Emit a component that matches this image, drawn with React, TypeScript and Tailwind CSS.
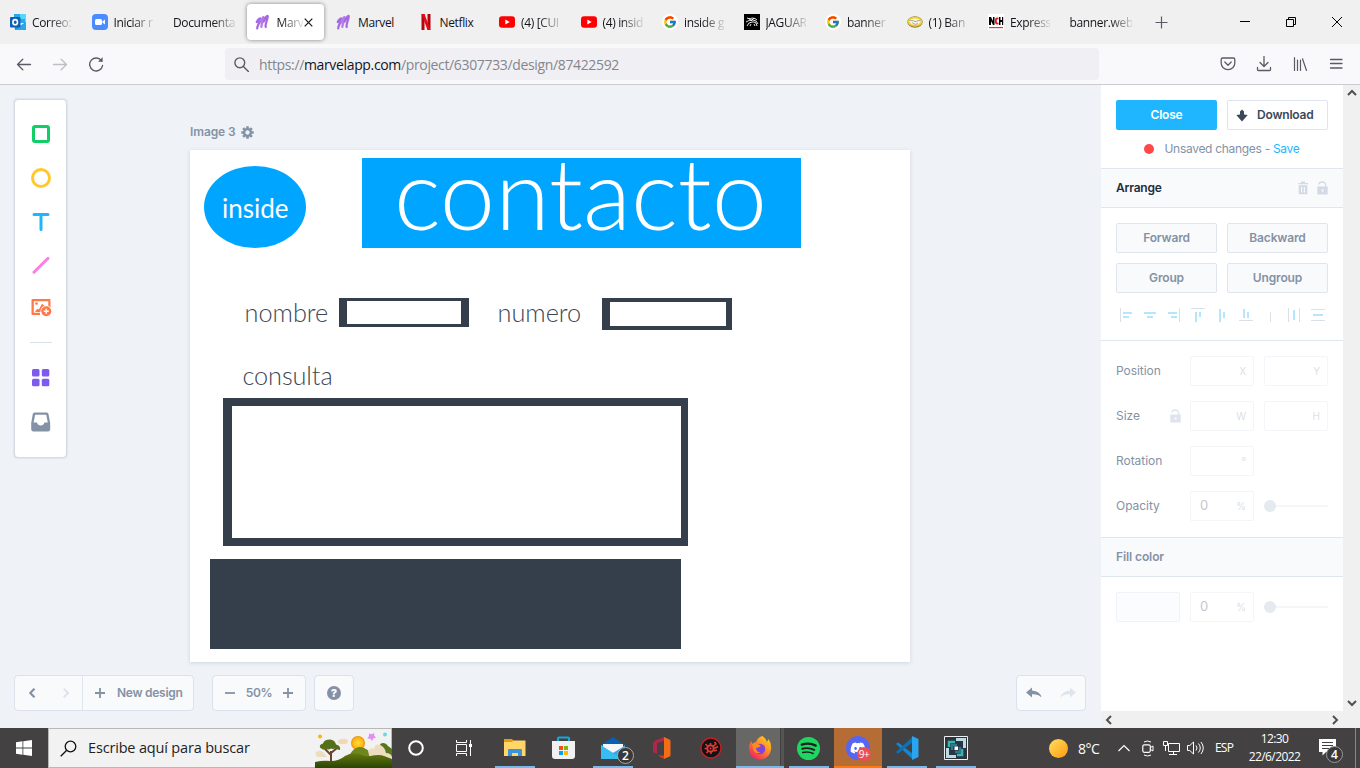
import React from "react";
import { FcGoogle } from "react-icons/fc";
import { FaDiscord } from "react-icons/fa";

const SYS = "font-['Open_Sans','Noto_Sans',sans-serif]";
const UI = "font-['Inter',sans-serif]";

/* ---------- favicons ---------- */

const MarvelIcon = () => (
  <svg width="16" height="16" viewBox="0 0 16 16" fill="none" strokeLinecap="round" strokeLinejoin="round">
    <path d="M1.800 8C3 5.400 5.800 3 5.400 5.200C5 8 2 11.500 2.200 14.400" stroke="#a468e0" strokeWidth="2.300" />
    <path d="M5.200 8.500C6.400 5 9 1.600 8.800 4C8.400 7.400 6.200 9.600 6.400 13" stroke="#b57be9" strokeWidth="2.200" />
    <path d="M8.800 7.500C10 4 12.900 -.2 12.700 2.800C12.300 6.800 9.600 10.600 10.800 13" stroke="#a468e0" strokeWidth="2.200" />
  </svg>
);

const OutlookIcon = () => (
  <svg width="16" height="16" viewBox="0 0 16 16">
    <path d="M4 0h11.500v9H4z" fill="#28a8ea" />
    <path d="M10 0h5.500v5H10z" fill="#50d9ff" />
    <path d="M4 5h6v5H4z" fill="#0364b8" />
    <path d="M4 9l6 3 6-4v8H5z" fill="#1490df" />
    <path d="M16 8v8H5z" fill="#28a8ea" />
    <rect y="3" width="10.500" height="10.500" rx="1" fill="#0f5fb5" />
    <ellipse cx="5.200" cy="8.200" rx="2.300" ry="2.600" fill="none" stroke="#fff" strokeWidth="1.600" />
  </svg>
);

const ZoomIcon = () => (
  <svg width="16" height="16" viewBox="0 0 16 16">
    <rect width="16" height="16" rx="4" fill="#4a8cff" />
    <rect x="3" y="5" width="7" height="6" rx="1.500" fill="#fff" />
    <path d="M10.500 7.300L13 5.500v5l-2.500-1.800z" fill="#fff" />
  </svg>
);

const NetflixIcon = () => (
  <svg width="16" height="16" viewBox="0 0 16 16">
    <path d="M3.500 0h3v16h-3zM9.500 0h3v16h-3z" fill="#b1060f" />
    <path d="M3.500 0h3l6 16h-3z" fill="#e50914" />
  </svg>
);

const YoutubeIcon = () => (
  <svg width="16" height="16" viewBox="0 0 16 16">
    <rect y="2.300" width="16" height="11.400" rx="3" fill="#f00" />
    <path d="M6.300 5.500v5L10.700 8z" fill="#fff" />
  </svg>
);

const GoogleIcon = () => (
  <span className="flex h-4 w-4 items-center justify-center rounded-full bg-white">
    <FcGoogle size={14} />
  </span>
);

const JaguarIcon = () => (
  <svg width="16" height="16" viewBox="0 0 16 16">
    <path d="M0 0h16v16H0z" fill="#000" />
    <path d="M3 4l3 1 2-1 3 .5 2 1.500M2 8l4-2 3 0 3 1 2 3M3 12l2-3 3-1 2 0 2 1 1 3M6 12l1-2M11 12l-1-2M5 4l2 3 3-3" fill="none" stroke="#fff" strokeWidth=".9" />
  </svg>
);

const MercadoIcon = () => (
  <svg width="16" height="16" viewBox="0 0 16 16">
    <ellipse cx="8" cy="8" rx="7.700" ry="5.700" fill="#8a7a3a" />
    <ellipse cx="8" cy="7.700" rx="7.200" ry="5" fill="#f7d02c" />
    <path d="M2 6.500Q8 2.500 14 6.500Q12.500 11 8 11Q3.500 11 2 6.500z" fill="#f6f5ea" />
    <path d="M2.500 6.500l4 .2 1.500 1 3-1 2.800-.2M5 8.500l2 1.500 2 .4 2-1.500" fill="none" stroke="#8b8b70" strokeWidth=".7" />
    <path d="M1.300 9.300Q8 15.500 14.700 9.300Q12 12 8 12Q4 12 1.300 9.300z" fill="#e3ac19" />
  </svg>
);

const NchIcon = () => (
  <svg width="16" height="16" viewBox="0 0 16 16">
    <path d="M0 0h16v16H0z" fill="#fff" />
    <path d="M1 11V3h2l2 4V3h1.500v8H5L3 7v4z" fill="#000" />
    <path d="M11 3v8h1.500V8H14v3h1.200V3H14v3h-1.500V3z" fill="#000" />
    <path d="M10.500 3.800Q7 2.500 6.800 7Q7 11.500 10.500 10.300V8.500Q8.700 9.300 8.700 7T10.500 5.600z" fill="#e02025" />
    <path d="M1 13h14v1.200H1z" fill="#c44" />
  </svg>
);

type Tab = { label: string; icon?: React.ReactNode; active?: boolean; whole?: boolean };
const tabs: Tab[] = [
  { label: "Correo:", icon: <OutlookIcon /> },
  { label: "Iniciar r", icon: <ZoomIcon /> },
  { label: "Documenta" },
  { label: "Marv", icon: <MarvelIcon />, active: true },
  { label: "Marvel", icon: <MarvelIcon />, whole: true },
  { label: "Netflix", icon: <NetflixIcon />, whole: true },
  { label: "(4) [CUI", icon: <YoutubeIcon /> },
  { label: "(4) insid", icon: <YoutubeIcon /> },
  { label: "inside g", icon: <GoogleIcon /> },
  { label: "JAGUAR", icon: <JaguarIcon /> },
  { label: "banner", icon: <GoogleIcon /> },
  { label: "(1) Ban", icon: <MercadoIcon /> },
  { label: "Express", icon: <NchIcon /> },
  { label: "banner.web" },
];

const FADE = "[mask-image:linear-gradient(to_right,#000_calc(100%-22px),transparent_calc(100%+3px))]";

function TabBar() {
  return (
    <div className="flex h-[44px] shrink-0 items-center bg-[#f0f0f0] pl-[2px]">
      {tabs.map((t, i) => (
        <div key={i} className="w-[81.5px] shrink-0">
          <div
            className={
              t.active
                ? "flex h-9 w-[77px] items-center rounded bg-white pl-2 shadow-[0_0_4px_rgba(0,0,0,0.45)]"
                : "flex h-9 w-[77px] items-center pl-2"
            }
          >
            {t.icon && <span className="mr-[6px] h-4 w-4 shrink-0">{t.icon}</span>}
            <span
              className={
                (t.active ? "w-[26px] " : t.icon ? "w-[40px] " : "w-[62px] ") +
                "shrink-0 whitespace-nowrap pt-[2px] text-[12px] tracking-[-0.35px] text-[#15141a] " +
                (t.whole ? "" : FADE)
              }
            >
              {t.label}
            </span>
            {t.active && (
              <svg className="ml-px" width="9" height="9" viewBox="0 0 9 9" stroke="#15141a" strokeWidth="1.200">
                <path d="M.7.7l7.600 7.600M8.300.7L.7 8.300" />
              </svg>
            )}
          </div>
        </div>
      ))}
      <svg className="ml-[12px] mt-px" width="13" height="13" viewBox="0 0 13 13" stroke="#5b5b66" strokeWidth="1.200">
        <path d="M6.500 .5v12M.5 6.500h12" />
      </svg>
      <div className="ml-auto flex items-center">
        <span className="flex w-[46px] justify-center">
          <svg width="10" height="10" viewBox="0 0 10 10" stroke="#000"><path d="M0 4.500h10" /></svg>
        </span>
        <span className="flex w-[46px] justify-center">
          <svg width="10" height="10" viewBox="0 0 10 10" stroke="#000" fill="none"><path d="M.5 2.500h7v7h-7zM2.500 2.500v-2h7v7h-2" /></svg>
        </span>
        <span className="flex w-[46px] justify-center">
          <svg width="10" height="10" viewBox="0 0 10 10" stroke="#000"><path d="M0 0l10 10M10 0L0 10" /></svg>
        </span>
      </div>
    </div>
  );
}

function Toolbar() {
  return (
    <div className="flex h-[41px] shrink-0 items-center border-b border-[#cccccf] bg-[#f9f9fb]">
      <svg className="ml-4" width="16" height="16" viewBox="0 0 16 16" fill="none" stroke="#5b5b66" strokeWidth="1.300" strokeLinecap="round" strokeLinejoin="round">
        <path d="M1.500 8.500h13M6.800 3.300L1.500 8.500l5.300 5.200" />
      </svg>
      <svg className="ml-5" width="16" height="16" viewBox="0 0 16 16" fill="none" stroke="#bebec4" strokeWidth="1.300" strokeLinecap="round" strokeLinejoin="round">
        <path d="M1.500 8.500h13M9.200 3.300l5.300 5.200-5.300 5.200" />
      </svg>
      <svg className="ml-5" width="16" height="16" viewBox="0 0 16 16" fill="none" stroke="#5b5b66" strokeWidth="1.400" strokeLinecap="round">
        <path d="M13.700 5A6.500 6.500 0 1 0 14.600 9.500" />
        <path d="M14.600 1.200v4.600H10z" fill="#5b5b66" stroke="none" />
      </svg>
      <div className="ml-[121px] flex h-8 w-[874px] items-center rounded bg-[#f0f0f4] pl-[9px]">
        <svg width="15" height="15" viewBox="0 0 15 15" fill="none" stroke="#5b5b66" strokeWidth="1.400" strokeLinecap="round">
          <circle cx="5.800" cy="5.800" r="4.900" /><path d="M9.400 9.400l5 5" />
        </svg>
        <span className="ml-[10px] whitespace-nowrap pt-px text-[14px] tracking-[-0.35px] text-[#85858c]">
          https://<span className="text-[#15141a]">marvelapp.com</span>/project/6307733/design/87422592
        </span>
      </div>
      <div className="ml-auto flex items-center gap-5 pr-4 text-[#5b5b66]">
        <svg width="16" height="16" viewBox="0 0 16 16" fill="none" stroke="currentColor" strokeWidth="1.300" strokeLinecap="round" strokeLinejoin="round">
          <path d="M2.700 2h10.600a1.500 1.500 0 0 1 1.500 1.500v3.800a6.800 6.300 0 0 1-13.600 0V3.500A1.500 1.500 0 0 1 2.700 2zM4.800 6L8 9.200 11.200 6" />
        </svg>
        <svg width="16" height="16" viewBox="0 0 16 16" fill="none" stroke="currentColor" strokeWidth="1.300" strokeLinecap="round" strokeLinejoin="round">
          <path d="M8 .5v9.800M4 6.500l4 4 4-4M1.500 11.500v2q0 1 1 1h11q1 0 1-1v-2" />
        </svg>
        <svg width="16" height="16" viewBox="0 0 16 16" fill="none" stroke="currentColor" strokeWidth="1.200" strokeLinecap="round">
          <path d="M2.500 1.500v13M5.500 4v10.500M8.500 4v10.500M10.500 2.800l4 11.700" />
        </svg>
        <svg width="16" height="16" viewBox="0 0 16 16" fill="none" stroke="currentColor" strokeWidth="1.300" strokeLinecap="round">
          <path d="M2.500 3.500h11.500M2.500 7.500h11.500M2.500 12h11.500" />
        </svg>
      </div>
    </div>
  );
}

/* ---------- editor ---------- */

function ToolPanel() {
  return (
    <div className="mt-[14px] flex h-[359px] w-[53px] shrink-0 flex-col items-center rounded border border-[#d5dbe5] bg-white pt-[23px] shadow-[0_0_2px_rgba(80,100,140,0.25)]">
      <svg width="22" height="22" viewBox="0 0 22 22" fill="none" stroke="#13ce66" strokeWidth="3"><rect x="3.500" y="3.500" width="15" height="15" rx="1.500" /></svg>
      <svg className="mt-[22px]" width="22" height="22" viewBox="0 0 22 22" fill="none" stroke="#ffc82c" strokeWidth="3"><circle cx="11" cy="11" r="8.500" /></svg>
      <svg className="mt-[22px]" width="22" height="22" viewBox="0 0 22 22" fill="none" stroke="#1fb6ff" strokeWidth="3" strokeLinecap="round"><path d="M4 3.500h14M11 4v14.500" /></svg>
      <svg className="mt-[21px]" width="22" height="22" viewBox="0 0 22 22" fill="none" stroke="#ff7ce5" strokeWidth="3" strokeLinecap="round"><path d="M4 18.300L18 4.300" /></svg>
      <svg className="mt-[20px]" width="22" height="22" viewBox="0 0 22 22">
        <path d="M2.500 3h17q1 0 1 1v8h-2.200V5.200H3.800v11.600H10V19H2.500q-1 0-1-1V4q0-1 1-1z" fill="#ff7849" />
        <circle cx="6.500" cy="7.500" r="1.300" fill="#ff7849" />
        <path d="M5 16l2-3 2 .3 3-5.500 2.500 2-4 6.200z" fill="#ff7849" />
        <circle cx="16.300" cy="15.200" r="5.800" fill="#fff" />
        <circle cx="16.300" cy="15.200" r="5" fill="#ff7849" />
        <path d="M16.300 12.700v5M13.800 15.200h5" stroke="#fff" strokeWidth="1.500" />
      </svg>
      <div className="mt-[24px] h-px w-[22px] bg-[#d9e1eb]" />
      <svg className="mt-6" width="22" height="22" viewBox="0 0 22 22" fill="#7e5bef">
        <rect x="2" y="2" width="7.500" height="7.500" rx="1.500" /><rect x="11.800" y="2" width="7.500" height="7.500" rx="1.500" />
        <rect x="2" y="11.800" width="7.500" height="7.500" rx="1.500" /><rect x="11.800" y="11.800" width="7.500" height="7.500" rx="1.500" />
      </svg>
      <svg className="mt-[22px]" width="22" height="22" viewBox="0 0 22 22">
        <path fillRule="evenodd" d="M4.500 1.500h12.300q1.400 0 1.700 1.500l1.700 9v6.300q0 2.200-2.200 2.200H3.400q-2.200 0-2.200-2.200V12L2.800 3q.3-1.500 1.700-1.500zM5.200 3.800L3.600 11.500H7q.7 3 3.700 3t3.700-3h3.400L16.200 3.800z" fill="#8492a6" />
      </svg>
    </div>
  );
}

function Artboard() {
  return (
    <div className="relative h-[512px] w-[720px] overflow-visible bg-white font-['Lato',sans-serif] text-[#3c4858] shadow-[0_1px_4px_rgba(60,80,120,0.18)]">
      <div className="absolute left-[14px] top-[16px] h-[82px] w-[102px] rounded-[50%] bg-[#00a5ff]" />
      <div className="absolute left-[32px] top-[45px] whitespace-nowrap text-[26px] leading-none text-white">inside</div>
      <div className="absolute left-[172px] top-[8px] h-[90px] w-[439px] bg-[#00a5ff]" />
      <div className="absolute left-[204px] top-[-8px] whitespace-nowrap text-[99.200px] font-light leading-none text-white">contacto</div>
      <div className="absolute left-[54.500px] top-[149.500px] whitespace-nowrap text-[25.300px] font-light leading-none">nombre</div>
      <div className="absolute left-[307.500px] top-[149.500px] whitespace-nowrap text-[25.300px] font-light leading-none">numero</div>
      <div className="absolute left-[52.500px] top-[212.500px] whitespace-nowrap text-[25.300px] font-light leading-none tracking-[-0.1px]">consulta</div>
      <div className="absolute left-[149px] top-[148px] h-[29px] w-[130px] border-x-8 border-y-[3px] border-[#343f4b]" />
      <div className="absolute left-[412px] top-[148px] h-[32px] w-[130px] border-y-4 border-l-8 border-r-[6px] border-[#343f4b]" />
      <div className="absolute left-[33px] top-[248px] h-[148px] w-[465px] border-y-8 border-l-[9px] border-r-[7px] border-[#343f4b]" />
      <div className="absolute left-[20px] top-[409px] h-[90px] w-[471px] bg-[#343f4b]" />
    </div>
  );
}

const BAR = "flex h-9 items-center rounded border border-[#dce2eb] bg-[#f9fafc]";

function Plus() {
  return <svg width="10" height="10" viewBox="0 0 10 10" stroke="#8492a6" strokeWidth="1.800"><path d="M5 0v10M0 5h10" /></svg>;
}

function BottomBar() {
  return (
    <div className={"flex pl-[14px] pr-[15px] text-[12px] font-semibold text-[#8492a6] " + UI}>
      <div className={BAR + " w-[180px]"}>
        <div className="flex h-full w-[68px] items-center border-r border-[#e0e6ed] pl-[14px]">
          <svg width="7" height="10" viewBox="0 0 7 10" fill="none" stroke="#8492a6" strokeWidth="2.200"><path d="M5.500.7L1.200 5l4.300 4.300" /></svg>
          <svg className="ml-[27px]" width="7" height="10" viewBox="0 0 7 10" fill="none" stroke="#dde3ec" strokeWidth="2"><path d="M.8.7L5.100 5 .8 9.300" /></svg>
        </div>
        <span className="ml-3"><Plus /></span>
        <span className="ml-[12px] whitespace-nowrap tracking-[-0.27px]">New design</span>
      </div>
      <div className={BAR + " ml-[18px] w-[94px] justify-between px-3"}>
        <svg width="10" height="10" viewBox="0 0 10 10" stroke="#8492a6" strokeWidth="1.800"><path d="M0 5h10" /></svg>
        <span className="tracking-[-0.3px]">50%</span>
        <Plus />
      </div>
      <div className={BAR + " ml-2 w-10 justify-center"}>
        <span className="flex h-[14px] w-[14px] items-center justify-center rounded-full bg-[#8492a6] text-[11px] font-extrabold leading-none text-white">?</span>
      </div>
      <div className={BAR + " ml-auto w-[70px] justify-between px-[9px]"}>
        <svg width="16" height="12" viewBox="0 0 16 12" fill="#8492a6"><path d="M0 5.500L6 .5v3q8 .5 9.500 7Q12 7 6 7.300v3.200z" /></svg>
        <svg width="16" height="12" viewBox="0 0 16 12" fill="#dfe5ed"><path d="M16 5.500L10 .5v3q-8 .5-9.500 7Q4 7 10 7.300v3.200z" /></svg>
      </div>
    </div>
  );
}

function Gear() {
  return (
    <svg width="13" height="13" viewBox="0 0 14 14">
      <g stroke="#8492a6" strokeWidth="2.800"><path d="M7 .3v13.400M.3 7h13.400M2.300 2.300l9.400 9.400M11.700 2.300l-9.400 9.400" /></g>
      <circle cx="7" cy="7" r="4.800" fill="#8492a6" /><circle cx="7" cy="7" r="2.300" fill="#eff2f7" />
    </svg>
  );
}

function Lock() {
  return (
    <svg width="11" height="14" viewBox="0 0 11 14">
      <path d="M1.800 3.500Q2.200 1 5.200 1T8.700 4v2" fill="none" stroke="#d3dae6" strokeWidth="1.300" />
      <path d="M.3 5.500h10.400v8H.3zM4.600 8.500v2h2v-2z" fillRule="evenodd" fill="#d3dae6" />
    </svg>
  );
}

const alignIcons: { b?: string; l?: string }[] = [
  { l: "M6.500 1v14", b: "M9 6h9M9 10h6" },
  { b: "M6 6h12M9 10h6" },
  { b: "M6 6h9M9 10h6", l: "M17.500 1v14" },
  { l: "M5 1.500h14", b: "M10 5v10M14 5v5" },
  { b: "M10 2v13M14 5v6" },
  { b: "M10 2v9M14 5v6", l: "M5 13.500h14" },
  { l: "M12.500 5v10" },
  { l: "M6.500 1v14M17.500 1v14", b: "M12 3v10" },
  { l: "M5 2.500h14M5 13.500h14", b: "M7 8h10" },
];

const Btn = ({ children }: { children: React.ReactNode }) => (
  <div className="flex h-[30px] items-center justify-center rounded-[2px] border border-[#dfe5ee] bg-[#f9fafc] font-semibold tracking-[-0.15px] text-[#8492a6]">{children}</div>
);

const Field = ({ value, unit }: { value?: string; unit: string }) => (
  <div className="flex h-[30px] w-16 shrink-0 items-center justify-between rounded-[2px] border border-[#f3f5f8] pl-[9px] pr-[7px]">
    <span className="text-[13px] text-[#c3c8d0]">{value}</span>
    <span className="text-[10px] text-[#dbdfe7]">{unit}</span>
  </div>
);

const Slider = () => (
  <div className="flex w-16 items-center">
    <span className="h-3 w-3 rounded-full bg-[#e5e9f0]" />
    <span className="h-[2px] flex-1 bg-[#f5f6f9]" />
  </div>
);

const Row = ({ label, lock, children }: { label: string; lock?: boolean; children: React.ReactNode }) => (
  <div className="flex items-center">
    <span className="w-[54px] tracking-[-0.05px]">{label}</span>
    <span className="w-5 opacity-75">{lock && <Lock />}</span>
    <div className="flex gap-[10px]">{children}</div>
  </div>
);

function Inspector() {
  return (
    <div className={"flex-1 overflow-hidden bg-white text-[12px] text-[#8492a6] " + UI}>
      <div className="h-[83px] px-[15px] pt-[15px]">
        <div className="grid grid-cols-2 gap-[10px] font-semibold">
          <div className="flex h-[30px] items-center justify-center rounded-[2px] bg-[#1fb6ff] tracking-[-0.2px] text-white">Close</div>
          <div className="flex h-[30px] items-center rounded-[2px] border border-[#dfe5ee] pl-2 text-[#3c4858]">
            <svg width="12" height="13" viewBox="0 0 12 13" fill="#3c4858"><path d="M4 2.500L6 .5l2 2V5.500l3.700.5L6 12.500.3 6 4 5.500z" /></svg>
            <span className="ml-[9px] tracking-[-0.2px]">Download</span>
          </div>
        </div>
        <div className="mt-[10px] flex h-[18px] items-center justify-center whitespace-nowrap">
          <span className="mr-[10px] h-[10px] w-[10px] rounded-full bg-[#ff4949]" />
          <span className="tracking-[-0.3px]">Unsaved changes - <span className="text-[#1fb6ff]">Save</span></span>
        </div>
      </div>
      <div className="flex h-10 items-center border-y border-[#e0e6ed] bg-[#f9fafc] px-[15px] font-semibold tracking-[-0.2px] text-[#1f2d3d]">
        Arrange
        <div className="ml-auto flex items-center gap-[9px]">
          <svg width="10" height="14" viewBox="0 0 10 14" fill="#d3dae6"><path fillRule="evenodd" d="M0 2h3V.5h4V2h3v1.200H0zM.7 4.300h8.600v9H.7zM3 6v5.600h1.200V6zm2.800 0v5.600H7V6z" /></svg>
          <Lock />
        </div>
      </div>
      <div className="h-[132px] px-[15px] pt-[15px]">
        <div className="grid grid-cols-2 gap-[10px]">
          <Btn>Forward</Btn><Btn>Backward</Btn><Btn>Group</Btn><Btn>Ungroup</Btn>
        </div>
        <div className="-ml-[2px] mt-[14px] flex">
          {alignIcons.map((a, i) => (
            <svg key={i} className="shrink-0" width="24" height="16" viewBox="0 0 24 16" fill="none">
              {a.l && <path d={a.l} stroke="#dadfe8" />}
              {a.b && <path d={a.b} stroke="#b4e6fd" strokeWidth="2" />}
            </svg>
          ))}
        </div>
      </div>
      <div className="flex h-[198px] flex-col gap-[15px] border-y border-[#e0e6ed] px-[15px] pt-[15px]">
        <Row label="Position"><Field unit="X" /><Field unit="Y" /></Row>
        <Row label="Size" lock><Field unit="W" /><Field unit="H" /></Row>
        <Row label="Rotation"><Field unit="°" /></Row>
        <Row label="Opacity"><Field value="0" unit="%" /><Slider /></Row>
      </div>
      <div className="flex h-[39px] items-center border-b border-[#e0e6ed] bg-[#f9fafc] px-[15px] font-semibold tracking-[-0.1px]">Fill color</div>
      <div className="flex gap-[10px] px-[15px] pt-[15px]">
        <div className="h-[30px] w-16 rounded-[2px] border border-[#eff2f7] bg-[#fbfcfe]" />
        <Field value="0" unit="%" />
        <Slider />
      </div>
    </div>
  );
}

const Chev = ({ d }: { d: string }) => (
  <svg width="10" height="10" viewBox="0 0 10 10" fill="none" stroke="#505050" strokeWidth="2"><path d={d} /></svg>
);

/* ---------- task bar ---------- */

const DT = "h-full w-[49px] shrink-0 flex flex-col items-center justify-center relative ";
const Cell = ({ children, line, cls = "" }: { children: React.ReactNode; line?: "app" | "full" | "alert"; cls?: string }) => (
  <div className={DT + cls}>
    {children}
    {line === "app" && <span className="absolute bottom-0 h-[2px] w-10 bg-[#76b9ed]" />}
    {line === "full" && <span className="absolute bottom-0 right-0 h-[2px] w-12 bg-[#76b9ed]" />}
    {line === "alert" && <span className="absolute bottom-0 right-0 h-[2px] w-12 bg-[#ff7a0c]" />}
  </div>
);

function Landscape() {
  return (
    <svg className="-mr-px ml-auto" width="77" height="39" viewBox="0 0 77 39">
      <defs>
        <radialGradient id="sun"><stop offset="0" stopColor="#ffdd35" /><stop offset=".7" stopColor="#ffb914" /><stop offset="1" stopColor="#e88a10" /></radialGradient>
        <linearGradient id="hill" x2="0" y2="1"><stop stopColor="#66780f" /><stop offset="1" stopColor="#274604" /></linearGradient>
      </defs>
      <circle cx="5" cy="7.500" r="2" fill="#ffb31a" />
      <circle cx="70" cy="5.500" r="2" fill="#6fd6e8" />
      <path d="M54 4.500l2.500.8L59 4l.3 2.700 1.700 2-2.600.6-1.400 2.700-1.600-2.300-3.100-.2 1.600-2.300z" fill="#e28cf5" />
      <ellipse cx="28" cy="12.500" rx="5" ry="2.800" fill="#f1d9b5" />
      <circle cx="43" cy="14" r="7" fill="url(#sun)" />
      <path d="M0 24q4-4 8-1l4 5H2z" fill="#eedcc0" />
      <path d="M34 27q4-8 10-9 8-1 16 12H34z" fill="#6d8718" />
      <path d="M65 15q5-3 8 2l4 3v10l-9-7z" fill="#56781a" />
      <path d="M53 22q3-4 6-2 1-6 6-4 5 2 6 8 5 0 6 4v2H55z" fill="#eedcc0" />
      <path d="M16 33V22M16 26l-6-6M16 24l6-5" stroke="#6b432e" strokeWidth="2" fill="none" />
      <path d="M5 18.500q-1-3 3-4 1-4 7-4 5 .5 6 5 5 1 4 5.500-3 0-4-2-3 1.500-5 .5-2 1.500-5 .5-2 2-6-1.500z" fill="#56701a" />
      <path d="M0 39V33q8-2 16-1 8 0 14-5 8-5 17-1 4 2 8 1 10-2 14 0l8 3v9z" fill="url(#hill)" />
    </svg>
  );
}

function Taskbar() {
  return (
    <div className="flex h-10 w-full shrink-0 items-center bg-[#434141] text-white">
      <div className="flex w-12 justify-center">
        <svg width="16" height="16" viewBox="0 0 16 16" fill="#fff"><path d="M0 2.200L6.500 1.300v6.300H0zM7.300 1.200L16 0v7.600H7.300zM0 8.400h6.500v6.300L0 13.800zM7.300 8.400H16V16l-8.700-1.200z" /></svg>
      </div>
      <div className="flex h-10 w-[344px] items-center border border-[#b8b8b8] bg-[#f2f2f2] pl-[11px]">
        <svg width="17" height="17" viewBox="0 0 17 17" fill="none" stroke="#111" strokeWidth="1.300"><circle cx="10.500" cy="6.500" r="5.300" /><path d="M6.700 10.300L.7 16.300" /></svg>
        <span className="ml-[11px] whitespace-nowrap text-[14.500px] tracking-[-0.17px] text-[#222]">Escribe aquí para buscar</span>
        <Landscape />
      </div>
      <div className="flex h-full">
        <Cell><svg className="mr-px" width="16" height="16" viewBox="0 0 16 16" fill="none" stroke="#fff" strokeWidth="2"><circle cx="8" cy="8" r="6.800" /></svg></Cell>
        <Cell><svg className="mr-1" width="16" height="16" viewBox="0 0 16 16" fill="none" stroke="#fff"><path d="M.5 0v2.500h10V0M.5 16v-2.500h10V16M.5 4.500h10v7H.5zM14.500 0v16" /><path d="M13 4h3v3h-3z" fill="#fff" stroke="none" /></svg></Cell>
        <Cell line="app">
          <svg width="22" height="20" viewBox="0 0 22 20"><path d="M0 1h8l2 2h11v7H0z" fill="#e0a106" /><path d="M0 4h8l1.500-1.500H21.500V18H0z" fill="#ffd667" /><path d="M4 18v-6q0-1 1-1h12q1 0 1 1v6h-4v-3H8v3z" fill="#3a93dd" /></svg>
        </Cell>
        <Cell>
          <svg width="23" height="24" viewBox="0 0 23 24"><path d="M6 6V2.500q0-1 1-1h9q1 0 1 1V6" fill="none" stroke="#12a8dc" strokeWidth="2.200" /><path d="M0 5h23v15q0 3-3 3H3q-3 0-3-3z" fill="#f1f1f1" /><path d="M7 10h4v4H7z" fill="#f25022" /><path d="M12 10h4v4h-4z" fill="#7fba00" /><path d="M7 15h4v4H7z" fill="#00a4ef" /><path d="M12 15h4v4h-4z" fill="#ffb900" /></svg>
        </Cell>
        <Cell line="app">
          <svg width="24" height="23" viewBox="0 0 24 23"><path d="M0 8L12 0l12 8v3H0z" fill="#0a5fb0" /><path d="M0 8l12 8 12-8v14H0z" fill="#2ea9ea" /><path d="M2 7h20v3l-10 6L2 10z" fill="#f4f6fa" /><path d="M0 8l13 9 11 5H0z" fill="#38bdf2" /></svg>
          <span className="absolute left-[29px] top-[19px] flex h-[17px] w-[17px] items-center justify-center rounded-full border border-[#aaa] bg-[#393939] text-[12px] font-semibold leading-none">2</span>
        </Cell>
        <Cell><svg width="18" height="22" viewBox="0 0 18 22"><path d="M11 0L2 3.800Q0 5 0 7v8l4 2V6l7-2z" fill="#b3264c" /><path d="M11 0l5.500 2.500Q17.500 3 17.500 4v14q0 1-1 1.500L11 22z" fill="#f36c16" /><path d="M2 17l9 5v-3.500H5z" fill="#d93a1e" /></svg></Cell>
        <Cell><svg width="22" height="22" viewBox="0 0 22 22" fill="none"><circle cx="11" cy="11" r="10" fill="#141214" stroke="#c32025" strokeWidth="1.400" /><circle cx="10.500" cy="11.500" r="3.200" stroke="#e23a34" strokeWidth="1.800" /><path d="M5.500 7l2 2M4.500 11.500l2.500 0M6.500 16l2-2M11 17v-2M10.500 6v2M16.500 6.500l-3.500 3M18 9.500l-4 2M14 14l3-1M14.500 5l1.500 2" stroke="#e23a34" strokeWidth="1.600" /><circle cx="10.500" cy="11.500" r="1" fill="#e23a34" /></svg></Cell>
        <Cell line="full" cls="bg-[linear-gradient(to_right,transparent_1px,#676766_1px,#676766_45px,#3f3f3f_45px,#3f3f3f_46px,#565554_46px)]">
          <svg className="ml-px" width="24" height="24" viewBox="0 0 24 24">
            <defs><linearGradient id="ff" x1="1" y1="0" x2=".2" y2="1"><stop stopColor="#ffe226" /><stop offset=".45" stopColor="#ff9025" /><stop offset="1" stopColor="#f31e66" /></linearGradient></defs>
            <path d="M14.500 0q4 3 4.500 6l1.500-3Q24 8 23 14q-2 9-11 9.500Q2 23 1 14q-.5-5 2-9l1.500 3Q6 6 8 6q2-5 6.500-6z" fill="url(#ff)" />
            <circle cx="12" cy="13" r="5.200" fill="#8243d8" />
            <path d="M4 8q5-2 9 2-2 1.500-5 2 0 4 4.500 4.500Q8 19 5.500 14z" fill="#ff8a22" />
          </svg>
        </Cell>
        <Cell line="app"><svg width="23" height="23" viewBox="0 0 24 24" fill="none" stroke="#202020" strokeLinecap="round"><circle cx="12" cy="12" r="12" fill="#1ed760" stroke="none" /><path d="M5 8q8-2.500 14.500 1" strokeWidth="2.400" /><path d="M5.500 12.300Q12 10.500 18 13.500" strokeWidth="2" /><path d="M6 16.200q6-1.500 10.800 1" strokeWidth="1.700" /></svg></Cell>
        <Cell line="alert" cls="bg-[linear-gradient(to_right,transparent_1px,#b56d35_1px)]">
          <span className="flex h-6 w-6 items-center justify-center rounded-full bg-[#5865f2]"><FaDiscord size={16} /></span>
          <span className="absolute left-[24px] top-[19px] flex h-[14px] w-[14px] items-center justify-center rounded-full bg-[#ed4f50] text-[10px] leading-none tracking-[-0.5px]">9+</span>
        </Cell>
        <Cell line="app"><svg width="24" height="24" viewBox="0 0 24 24"><path d="M1 8l2-1.700L18 18v5.500z" fill="#1686cf" /><path d="M1 16l2 1.700L18 6V.5z" fill="#0b72b8" /><path d="M17 0l6.500 3v18L17 24z" fill="#2aa4ee" /></svg></Cell>
        <Cell line="app">
          <svg width="24" height="24" viewBox="0 0 24 24" fill="none"><path d="M.5 .5h23v23H.5z" fill="#2c3442" stroke="#eee" /><path d="M12 3.500h8.500V12M3.500 12v8.500H12" stroke="#b9dce4" strokeWidth="3" /><path d="M5 11V6h6M13 19h5v-6" stroke="#34b9a7" strokeWidth="2.600" /><path d="M8 14V9h5M16 11v5h-5" stroke="#297a93" strokeWidth="2.400" /><path d="M10.500 10.500h3.500v3.500h-3.500z" fill="#fff" /></svg>
        </Cell>
      </div>
      <div className="ml-auto flex h-full items-center">
        <span className="h-[19px] w-[19px] rounded-full bg-[linear-gradient(135deg,#ffdf62,#ff9a0c)]" />
        <span className="ml-[10px] w-[39px] whitespace-nowrap pt-px text-[14px] tracking-[-0.55px]">8°C</span>
        <svg width="14" height="8" viewBox="0 0 14 8" fill="none" stroke="#fff" strokeWidth="1.200"><path d="M1.500 7L7 1.500 12.500 7" /></svg>
        <svg className="ml-[11px]" width="12" height="17" viewBox="0 0 12 17" fill="none" stroke="#fff"><path d="M2 2q3.500-2 7 0M2 15q3.500 2 7 0" /><rect x=".8" y="4.800" width="7.500" height="7.500" rx="1.500" strokeWidth="1.200" /><path d="M8.500 7.500l2.500-1.500v5L8.500 9.500" /></svg>
        <svg className="ml-[9px]" width="17" height="15" viewBox="0 0 17 15" fill="none" stroke="#fff"><path d="M5.500 2.500h11v8h-11zM6 13.500h8M10.500 10.500v3M.5 .5h4v4h-4zM2.500 4.500v5.500" /></svg>
        <svg className="ml-[7px]" width="17" height="16" viewBox="0 0 17 16" fill="none" stroke="#fff"><path d="M.5 5.500h2.300L6.500 2v12L2.800 10.500H.5zM9 5.500q2 2.500 0 5M11.500 3.500q3.500 4.500 0 9M14 2q4.500 6 0 12" /></svg>
        <span className="ml-[11px] w-[20px] whitespace-nowrap text-[12px] tracking-[-0.8px]">ESP</span>
        <div className="ml-[11px] flex w-[57px] flex-col items-center whitespace-nowrap text-[12px] leading-[18px] tracking-[-0.6px]">
          <span>12:30</span><span>22/6/2022</span>
        </div>
        <div className="relative ml-[16px] h-[26px] w-[26px]">
          <svg className="mt-[4px]" width="17" height="17" viewBox="0 0 17 17"><path d="M0 0h17v13H7l-3.500 3.500V13H0z" fill="#fff" /><path d="M3 3.500h11M3 6.500h11M3 9.500h8" stroke="#434141" /></svg>
          <span className="absolute left-[7px] top-[11px] flex h-[17px] w-[17px] items-center justify-center rounded-full border border-[#999] bg-[#393939] text-[12px] font-semibold leading-none">4</span>
        </div>
        <span className="ml-[10px] mr-1 h-full w-px bg-[#8a8888]" />
      </div>
    </div>
  );
}

export default function App() {
  return (
    <div className={"flex h-[768px] w-[1360px] flex-col overflow-hidden bg-[#eff2f7] " + SYS}>
      <TabBar />
      <Toolbar />
      <div className="flex h-[643px] shrink-0">
        <main className="flex w-[1101px] flex-col">
          <div className="flex h-[590px] pl-[14px]">
            <ToolPanel />
            <div className="ml-[123px] pt-px">
              <div className={"flex h-[64.400px] items-end gap-[5px] pb-[11px] text-[12px] font-semibold leading-[15px] text-[#8492a6] " + UI}>
                <span className="tracking-[-0.1px]">Image 3</span><Gear />
              </div>
              <Artboard />
            </div>
          </div>
          <BottomBar />
        </main>
        <aside className="flex w-[242px] flex-col">
          <Inspector />
          <div className="flex h-[17px] items-center justify-between bg-[#f0f0f0] px-[3px]">
            <Chev d="M7 1L3 5l4 4" /><Chev d="M3 1l4 4-4 4" />
          </div>
        </aside>
        <div className="flex w-[17px] flex-col items-center justify-between bg-[#f0f0f0] pb-[20px] pt-[3px]">
          <Chev d="M1 7l4-4 4 4" /><Chev d="M1 3l4 4 4-4" />
        </div>
      </div>
      <Taskbar />
    </div>
  );
}
